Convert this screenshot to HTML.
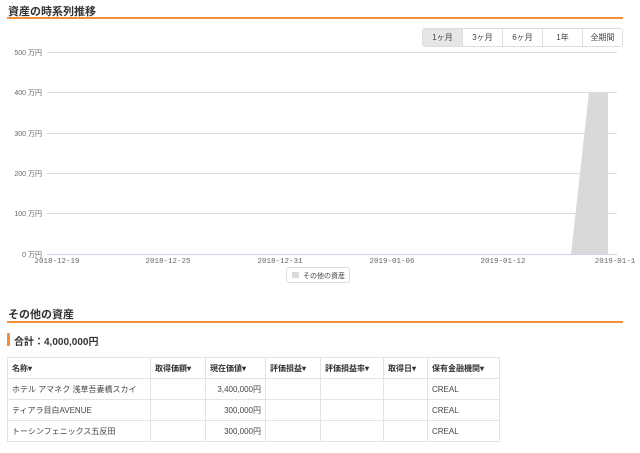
<!DOCTYPE html>
<html><head><meta charset="utf-8"><style>
body{margin:0;width:640px;height:453px;background:#fff;font-family:"Liberation Sans","Noto Sans CJK JP",sans-serif;color:#333;position:relative;overflow:hidden}
.abs{position:absolute}
h2{position:absolute;margin:0;font-size:11px;font-weight:bold;color:#333}
.line{position:absolute;left:7px;width:616px;height:2px;background:#f0903a}
.btns{position:absolute;left:422px;top:28px;display:flex;border:1px solid #ddd;border-radius:3px;overflow:hidden}
.btns div{width:39px;height:17px;line-height:17px;text-align:center;font-size:8px;color:#444;border-left:1px solid #ddd;background:#fff}
.btns div:first-child{border-left:none;background:#e6e6e6}
table{position:absolute;left:7px;top:357px;border-collapse:collapse;font-size:8px;color:#444;border:1px solid #e3e3e3;table-layout:fixed;width:492px}
td,th{border:1px solid #e3e3e3;height:20px;padding:0 4px;text-align:left;white-space:nowrap;overflow:hidden}
th{font-weight:bold;color:#333}
td.r{text-align:right}
</style></head><body>
<h2 style="left:8px;top:3px">資産の時系列推移</h2>
<div class="line" style="top:17px"></div>
<div class="btns"><div>1ヶ月</div><div>3ヶ月</div><div>6ヶ月</div><div>1年</div><div>全期間</div></div>
<svg class="abs" style="left:0;top:0" width="640" height="290" font-family="Liberation Sans, Noto Sans CJK JP, sans-serif">
<g stroke="#ddd" stroke-width="1">
<line x1="47" x2="617" y1="52.5" y2="52.5"/><line x1="47" x2="617" y1="92.5" y2="92.5"/>
<line x1="47" x2="617" y1="133.5" y2="133.5"/><line x1="47" x2="617" y1="173.5" y2="173.5"/>
<line x1="47" x2="617" y1="213.5" y2="213.5"/></g>
<line x1="47" x2="617" y1="254.5" y2="254.5" stroke="#ccd6eb"/>
<polygon points="571,254 589,92 608,92 608,254" fill="#d9d9d9"/>
<g font-size="7" fill="#666" text-anchor="end">
<text x="42" y="55">500 万円</text><text x="42" y="95">400 万円</text><text x="42" y="136">300 万円</text>
<text x="42" y="176">200 万円</text><text x="42" y="216">100 万円</text><text x="42" y="257">0 万円</text></g>
<g font-size="7.5" fill="#666" text-anchor="middle" font-family="Liberation Mono, monospace">
<text x="57" y="263">2018-12-19</text><text x="168" y="263">2018-12-25</text><text x="280" y="263">2018-12-31</text>
<text x="392" y="263">2019-01-06</text><text x="503" y="263">2019-01-12</text><text x="615" y="263">2019-01-1</text></g>
<rect x="286.5" y="267.5" width="63" height="15" rx="2" fill="#fff" stroke="#ddd"/>
<rect x="292" y="272" width="7" height="6" fill="#d9d9d9"/>
<text x="303" y="278" font-size="7" fill="#444">その他の資産</text>
</svg>
<h2 style="left:8px;top:306px">その他の資産</h2>
<div class="line" style="top:321px"></div>
<div class="abs" style="left:7px;top:333px;width:3px;height:13px;background:#f0903a"></div>
<div class="abs" style="left:14px;top:333px;font-size:10px;font-weight:bold;color:#333">合計：4,000,000円</div>
<table>
<colgroup><col style="width:143px"><col style="width:55px"><col style="width:60px"><col style="width:55px"><col style="width:63px"><col style="width:44px"><col style="width:72px"></colgroup>
<tr><th>名称▾</th><th>取得価額▾</th><th>現在価値▾</th><th>評価損益▾</th><th>評価損益率▾</th><th>取得日▾</th><th>保有金融機関▾</th></tr>
<tr><td>ホテル アマネク 浅草吾妻橋スカイ</td><td></td><td class="r">3,400,000円</td><td></td><td></td><td></td><td>CREAL</td></tr>
<tr><td>ティアラ目白AVENUE</td><td></td><td class="r">300,000円</td><td></td><td></td><td></td><td>CREAL</td></tr>
<tr><td>トーシンフェニックス五反田</td><td></td><td class="r">300,000円</td><td></td><td></td><td></td><td>CREAL</td></tr>
</table>
</body></html>
